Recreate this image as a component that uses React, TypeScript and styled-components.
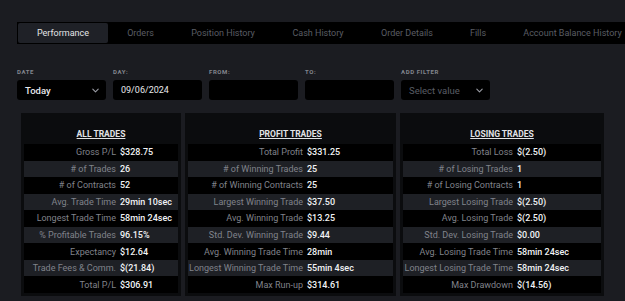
import React from 'react';
import styled, { createGlobalStyle } from 'styled-components';

const GlobalStyle = createGlobalStyle`
    html, body {
        margin: 0;
        padding: 0;
        background: #1b1c21;
        font-family: 'Roboto', 'Liberation Sans', sans-serif;
        overflow: hidden;
    }
`;

const tabs = [
    { name: 'Performance', width: 90 },
    { name: 'Orders', width: 65 },
    { name: 'Position History', width: 100 },
    { name: 'Cash History', width: 90 },
    { name: 'Order Details', width: 88 },
    { name: 'Fills', width: 54 },
    { name: 'Account Balance History', width: 135 },
];

type Row = [string, string];

const allTrades: Row[] = [
    ['Gross P/L', '$328.75'],
    ['# of Trades', '26'],
    ['# of Contracts', '52'],
    ['Avg. Trade Time', '29min 10sec'],
    ['Longest Trade Time', '58min 24sec'],
    ['% Profitable Trades', '96.15%'],
    ['Expectancy', '$12.64'],
    ['Trade Fees & Comm.', '$(21.84)'],
    ['Total P/L', '$306.91'],
];

const profitTrades: Row[] = [
    ['Total Profit', '$331.25'],
    ['# of Winning Trades', '25'],
    ['# of Winning Contracts', '25'],
    ['Largest Winning Trade', '$37.50'],
    ['Avg. Winning Trade', '$13.25'],
    ['Std. Dev. Winning Trade', '$9.44'],
    ['Avg. Winning Trade Time', '28min'],
    ['Longest Winning Trade Time', '55min 4sec'],
    ['Max Run-up', '$314.61'],
];

const losingTrades: Row[] = [
    ['Total Loss', '$(2.50)'],
    ['# of Losing Trades', '1'],
    ['# of Losing Contracts', '1'],
    ['Largest Losing Trade', '$(2.50)'],
    ['Avg. Losing Trade', '$(2.50)'],
    ['Std. Dev. Losing Trade', '$0.00'],
    ['Avg. Losing Trade Time', '58min 24sec'],
    ['Longest Losing Trade Time', '58min 24sec'],
    ['Max Drawdown', '$(14.56)'],
];

const Chevron: React.FC = () => (
    <svg width="9" height="9" viewBox="0 0 10 10" fill="none">
        <path d="M2 3.5 L5 6.5 L8 3.5" stroke="#9a9ca4" strokeWidth="1.2" strokeLinecap="round" strokeLinejoin="round" />
    </svg>
);

const StatsCard: React.FC<{ title: string; rows: Row[]; width: number; labelWidth: number }> = ({
    title,
    rows,
    width,
    labelWidth,
}) => (
    <Card width={width}>
        <CardTitle>{title}</CardTitle>
        <Rows>
            {rows.map(([label, value], i) => (
                <StatRow key={label} striped={i % 2 === 1} labelWidth={labelWidth}>
                    <StatLabel>
                        <span>{label}</span>
                    </StatLabel>
                    <StatValue>{value}</StatValue>
                </StatRow>
            ))}
        </Rows>
    </Card>
);

const App: React.FC = () => {
    return (
        <Page>
            <GlobalStyle />
            <TabBar>
                {tabs.map((tab, i) => (
                    <Tab key={tab.name} active={i === 0} width={tab.width}>
                        {tab.name}
                    </Tab>
                ))}
            </TabBar>
            <Filters>
                <Field>
                    <FieldLabel>Date</FieldLabel>
                    <Select>
                        <span>Today</span>
                        <Chevron />
                    </Select>
                </Field>
                <Field>
                    <FieldLabel>Day:</FieldLabel>
                    <Input>09/06/2024</Input>
                </Field>
                <Field>
                    <FieldLabel>From:</FieldLabel>
                    <Input />
                </Field>
                <Field>
                    <FieldLabel>To:</FieldLabel>
                    <Input />
                </Field>
                <Field>
                    <FieldLabel>Add Filter</FieldLabel>
                    <Select placeholder>
                        <span>Select value</span>
                        <Chevron />
                    </Select>
                </Field>
            </Filters>
            <Cards>
                <StatsCard title="ALL TRADES" rows={allTrades} width={160} labelWidth={92} />
                <StatsCard title="PROFIT TRADES" rows={profitTrades} width={211} labelWidth={115} />
                <StatsCard title="LOSING TRADES" rows={losingTrades} width={204} labelWidth={110} />
            </Cards>
        </Page>
    );
};

const Page = styled.div`
    width: 625px;
    height: 301px;
    padding: 22px 0 0 17px;
    box-sizing: border-box;
    overflow: hidden;
`;

const TabBar = styled.div`
    display: flex;
    align-items: stretch;
    height: 22px;
    width: 640px;
    background: #000000;
    padding: 1px;
    box-sizing: border-box;
`;

const Tab = styled.div<{ active?: boolean; width: number }>`
    flex: none;
    width: ${(p) => p.width}px;
    display: flex;
    align-items: center;
    justify-content: center;
    font-size: 9px;
    color: ${(p) => (p.active ? '#e4e5e8' : '#5a5d64')};
    background: ${(p) => (p.active ? '#1f2127' : 'transparent')};
    border-radius: 2px;
    white-space: nowrap;
`;

const Filters = styled.div`
    display: flex;
    gap: 7px;
    margin-top: 24px;
`;

const Field = styled.div`
    display: flex;
    flex-direction: column;
    gap: 5px;
`;

const FieldLabel = styled.div`
    font-size: 6px;
    font-weight: 700;
    letter-spacing: 0.6px;
    text-transform: uppercase;
    color: #83868e;
    height: 7px;
    line-height: 7px;
`;

const Select = styled.div<{ placeholder?: boolean }>`
    width: 89px;
    height: 20px;
    box-sizing: border-box;
    padding: 0 6px 0 8px;
    display: flex;
    align-items: center;
    justify-content: space-between;
    background: #000000;
    border-radius: 3px;
    font-size: 9.5px;
    font-weight: ${(p) => (p.placeholder ? 400 : 500)};
    color: ${(p) => (p.placeholder ? '#5a5d65' : '#e8e9ec')};
`;

const Input = styled.div`
    width: 89px;
    height: 20px;
    box-sizing: border-box;
    padding: 0 8px;
    display: flex;
    align-items: center;
    background: #000000;
    border-radius: 3px;
    font-size: 9px;
    color: #e8e9ec;
`;

const Cards = styled.div`
    display: flex;
    gap: 4px;
    margin-top: 13px;
    margin-left: 4px;
`;

const Card = styled.div<{ width: number }>`
    flex: none;
    width: ${(p) => p.width}px;
    background: #0b0c0e;
    padding: 0 3px 3px;
    box-sizing: border-box;
`;

const CardTitle = styled.div`
    height: 31px;
    padding-top: 10px;
    box-sizing: border-box;
    display: flex;
    align-items: center;
    justify-content: center;
    font-size: 8.5px;
    font-weight: 700;
    color: #e2e3e6;
    text-decoration: underline;
`;

const Rows = styled.div`
    display: flex;
    flex-direction: column;
`;

const StatRow = styled.div<{ striped?: boolean; labelWidth: number }>`
    display: grid;
    grid-template-columns: ${(p) => p.labelWidth}px 1fr;
    column-gap: 4px;
    align-items: center;
    height: 16.55px;
    background: ${(p) => (p.striped ? '#1e2025' : '#000000')};
    font-size: 9px;
    white-space: nowrap;
`;

const StatLabel = styled.div`
    display: flex;
    justify-content: flex-end;
    min-width: 0;
    color: #80838b;
    span {
        flex: none;
    }
`;

const StatValue = styled.div`
    color: #f2f3f5;
    font-weight: 500;
`;

export default App;
